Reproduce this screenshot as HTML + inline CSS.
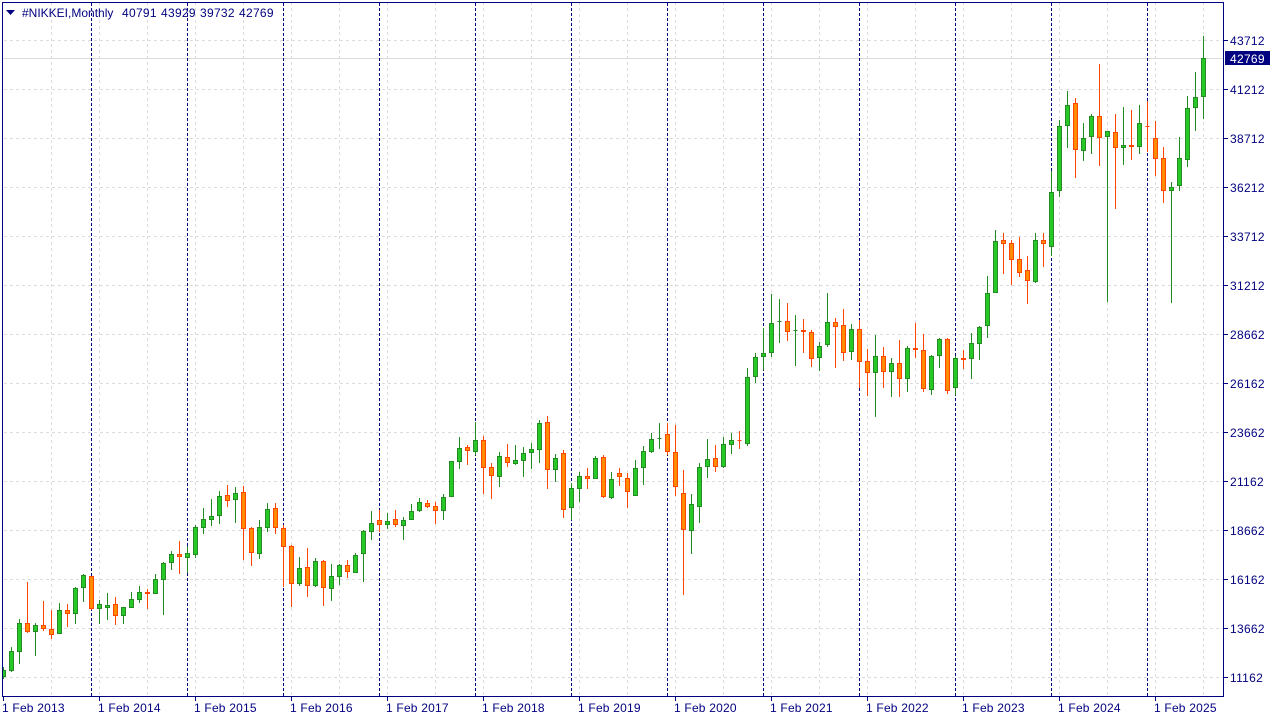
<!DOCTYPE html>
<html><head><meta charset="utf-8"><title>NIKKEI Monthly</title>
<style>
html,body{margin:0;padding:0;background:#fff;width:1280px;height:720px;overflow:hidden}
svg{display:block}
text{font-family:"Liberation Sans",Arial,sans-serif;font-size:12px;fill:#000080}
.p{letter-spacing:.3px}
.d{letter-spacing:.2px}
</style></head><body>
<svg width="1280" height="720" viewBox="0 0 1280 720" xmlns="http://www.w3.org/2000/svg">
<g shape-rendering="crispEdges">
<path fill="none" stroke="#dcdcdc" stroke-dasharray="3 3" d="M4 40.5H1223M4 89.5H1223M4 138.5H1223M4 187.5H1223M4 236.5H1223M4 285.5H1223M4 334.5H1223M4 383.5H1223M4 432.5H1223M4 481.5H1223M4 530.5H1223M4 579.5H1223M4 628.5H1223M4 677.5H1223"/>
<path fill="none" stroke="#dcdcdc" stroke-dasharray="3 3" d="M51.5 2V696M99.5 2V696M147.5 2V696M195.5 2V696M243.5 2V696M291.5 2V696M339.5 2V696M387.5 2V696M435.5 2V696M483.5 2V696M531.5 2V696M579.5 2V696M627.5 2V696M675.5 2V696M723.5 2V696M771.5 2V696M819.5 2V696M867.5 2V696M915.5 2V696M963.5 2V696M1011.5 2V696M1059.5 2V696M1107.5 2V696M1155.5 2V696M1203.5 2V696"/>
<path fill="none" stroke="#dcdcdc" d="M3 58.5H1223"/>
<path fill="none" stroke="#000080" stroke-dasharray="3 2" d="M91.5 3V696M187.5 3V696M283.5 3V696M379.5 3V696M475.5 3V696M571.5 3V696M667.5 3V696M763.5 3V696M859.5 3V696M955.5 3V696M1051.5 3V696M1147.5 3V696"/>
<path fill="none" stroke="#228b22" d="M3.5 667V679M11.5 647V672M19.5 619V664M35.5 623V656M59.5 603V634M75.5 587V624M83.5 574V602M99.5 600V624M107.5 593V620M123.5 607V624M131.5 592V608M139.5 586V603M155.5 574V594M163.5 562V615M171.5 551V570M187.5 546V573M195.5 525V558M203.5 508V534M211.5 499V526M219.5 491V524M235.5 487V523M259.5 520V559M267.5 503V532M299.5 557V586M315.5 558V587M331.5 564V601M339.5 564V585M355.5 553V573M363.5 530V582M371.5 511V540M387.5 513V529M403.5 517V540M411.5 504V520M419.5 498V512M443.5 494V520M451.5 461V497M459.5 437V469M475.5 422V455M499.5 452V487M515.5 445V465M523.5 447V477M531.5 443V469M539.5 420V463M555.5 454V482M571.5 483V520M579.5 472V502M595.5 456V479M611.5 472V499M635.5 460V496M643.5 446V485M651.5 433V453M659.5 423V449M691.5 494V554M699.5 463V523M707.5 439V478M723.5 437V468M731.5 433V454M747.5 368V446M755.5 353V383M763.5 328V370M771.5 294V357M779.5 299V343M795.5 315V366M819.5 342V371M827.5 293V347M851.5 324V360M875.5 335V417M891.5 358V397M907.5 346V392M931.5 355V395M939.5 338V368M955.5 356V395M971.5 333V379M979.5 326V360M987.5 276V338M995.5 230V293M1035.5 233V283M1051.5 171V256M1059.5 120V197M1067.5 91V148M1083.5 123V161M1091.5 114V154M1107.5 131V302M1123.5 107V165M1139.5 105V154M1171.5 182V303M1179.5 137V191M1187.5 96V167M1195.5 72V131M1203.5 36V119"/>
<path fill="none" stroke="#ff4500" d="M27.5 582V633M43.5 601V631M51.5 610V639M67.5 604V627M91.5 576V610M115.5 597V625M147.5 589V609M179.5 541V574M227.5 485V507M243.5 486V560M251.5 527V566M275.5 503V534M283.5 525V587M291.5 545V607M307.5 548V597M323.5 560V606M347.5 560V578M379.5 510V532M395.5 510V527M427.5 500V508M435.5 502V524M467.5 445V465M483.5 436V494M491.5 463V499M507.5 444V467M547.5 416V489M563.5 450V518M587.5 468V489M603.5 455V498M619.5 468V486M627.5 473V508M667.5 423V455M675.5 425V496M683.5 470V595M715.5 445V472M739.5 431V449M787.5 303V341M803.5 319V353M811.5 330V367M835.5 318V368M843.5 309V361M859.5 320V388M867.5 349V396M883.5 347V388M899.5 340V397M915.5 323V358M923.5 334V392M947.5 338V394M963.5 350V369M1003.5 233V274M1011.5 240V285M1019.5 237V277M1027.5 256V304M1043.5 233V267M1075.5 98V178M1099.5 64V166M1115.5 114V209M1131.5 110V160M1147.5 101V152M1155.5 121V176M1163.5 147V203"/>
<path fill="#28c828" stroke="#228b22" d="M2.5 670.5h3v6h-3zM9.5 651.5h4v19h-4zM17.5 623.5h4v28h-4zM33.5 625.5h4v6h-4zM57.5 610.5h4v23h-4zM73.5 588.5h4v25h-4zM81.5 575.5h4v12h-4zM97.5 604.5h4v4h-4zM105.5 605.5h4v2h-4zM121.5 607.5h4v8h-4zM129.5 599.5h4v8h-4zM137.5 592.5h4v7h-4zM153.5 579.5h4v14h-4zM161.5 563.5h4v16h-4zM169.5 554.5h4v8h-4zM185.5 553.5h4v4h-4zM193.5 527.5h4v27h-4zM201.5 519.5h4v8h-4zM209.5 516.5h4v3h-4zM217.5 496.5h4v19h-4zM233.5 493.5h4v6h-4zM257.5 527.5h4v26h-4zM265.5 509.5h4v18h-4zM297.5 568.5h4v15h-4zM313.5 561.5h4v24h-4zM329.5 576.5h4v12h-4zM337.5 565.5h4v11h-4zM353.5 555.5h4v17h-4zM361.5 531.5h4v22h-4zM369.5 523.5h4v8h-4zM385.5 521.5h4v3h-4zM401.5 520.5h4v5h-4zM409.5 511.5h4v8h-4zM417.5 502.5h4v8h-4zM441.5 497.5h4v13h-4zM449.5 461.5h4v35h-4zM457.5 448.5h4v13h-4zM473.5 440.5h4v11h-4zM497.5 456.5h4v20h-4zM513.5 460.5h4v3h-4zM521.5 453.5h4v7h-4zM529.5 449.5h4v3h-4zM537.5 423.5h4v26h-4zM553.5 458.5h4v11h-4zM569.5 488.5h4v19h-4zM577.5 476.5h4v12h-4zM593.5 458.5h4v20h-4zM609.5 479.5h4v18h-4zM633.5 468.5h4v27h-4zM641.5 451.5h4v16h-4zM649.5 439.5h4v12h-4zM657.5 438.5h4v0h-4zM689.5 504.5h4v26h-4zM697.5 467.5h4v39h-4zM705.5 459.5h4v7h-4zM721.5 444.5h4v22h-4zM729.5 440.5h4v4h-4zM745.5 377.5h4v66h-4zM753.5 357.5h4v19h-4zM761.5 353.5h4v3h-4zM769.5 323.5h4v29h-4zM777.5 321.5h4v0h-4zM793.5 330.5h4v0h-4zM817.5 346.5h4v11h-4zM825.5 322.5h4v22h-4zM849.5 329.5h4v22h-4zM873.5 356.5h4v16h-4zM889.5 363.5h4v8h-4zM905.5 348.5h4v30h-4zM929.5 356.5h4v33h-4zM937.5 339.5h4v16h-4zM953.5 358.5h4v29h-4zM969.5 343.5h4v15h-4zM977.5 327.5h4v16h-4zM985.5 293.5h4v32h-4zM993.5 241.5h4v51h-4zM1033.5 240.5h4v41h-4zM1049.5 192.5h4v54h-4zM1057.5 126.5h4v64h-4zM1065.5 105.5h4v20h-4zM1081.5 138.5h4v12h-4zM1089.5 116.5h4v20h-4zM1105.5 131.5h4v5h-4zM1121.5 145.5h4v2h-4zM1137.5 123.5h4v23h-4zM1169.5 187.5h4v3h-4zM1177.5 158.5h4v27h-4zM1185.5 108.5h4v51h-4zM1193.5 97.5h4v10h-4zM1201.5 58.5h4v38h-4z"/>
<path fill="#ff8c00" stroke="#ff4500" d="M25.5 623.5h4v8h-4zM41.5 625.5h4v3h-4zM49.5 629.5h4v5h-4zM65.5 610.5h4v3h-4zM89.5 576.5h4v32h-4zM113.5 604.5h4v11h-4zM145.5 592.5h4v1h-4zM177.5 554.5h4v2h-4zM225.5 495.5h4v5h-4zM241.5 492.5h4v36h-4zM249.5 528.5h4v24h-4zM273.5 508.5h4v19h-4zM281.5 528.5h4v18h-4zM289.5 546.5h4v37h-4zM305.5 567.5h4v18h-4zM321.5 561.5h4v26h-4zM345.5 565.5h4v6h-4zM377.5 520.5h4v4h-4zM393.5 519.5h4v5h-4zM425.5 503.5h4v3h-4zM433.5 506.5h4v4h-4zM465.5 447.5h4v3h-4zM481.5 440.5h4v27h-4zM489.5 467.5h4v8h-4zM505.5 457.5h4v5h-4zM545.5 422.5h4v47h-4zM561.5 453.5h4v56h-4zM585.5 476.5h4v2h-4zM601.5 457.5h4v39h-4zM617.5 473.5h4v3h-4zM625.5 478.5h4v13h-4zM665.5 434.5h4v17h-4zM673.5 452.5h4v34h-4zM681.5 493.5h4v36h-4zM713.5 458.5h4v8h-4zM737.5 440.5h4v0h-4zM785.5 321.5h4v10h-4zM801.5 330.5h4v1h-4zM809.5 332.5h4v26h-4zM833.5 322.5h4v4h-4zM841.5 325.5h4v27h-4zM857.5 329.5h4v32h-4zM865.5 361.5h4v11h-4zM881.5 356.5h4v15h-4zM897.5 363.5h4v15h-4zM913.5 348.5h4v1h-4zM921.5 350.5h4v38h-4zM945.5 339.5h4v51h-4zM961.5 358.5h4v1h-4zM1001.5 240.5h4v3h-4zM1009.5 243.5h4v16h-4zM1017.5 259.5h4v13h-4zM1025.5 270.5h4v10h-4zM1041.5 240.5h4v3h-4zM1073.5 103.5h4v46h-4zM1097.5 116.5h4v21h-4zM1113.5 132.5h4v15h-4zM1129.5 145.5h4v1h-4zM1145.5 126.5h4v0h-4zM1153.5 138.5h4v20h-4zM1161.5 158.5h4v32h-4z"/>
<path fill="none" stroke="#000080" d="M2.5 2.5H1223.5V696.5H2.5Z"/>
<path fill="none" stroke="#000080" d="M1224 40.5h4M1224 89.5h4M1224 138.5h4M1224 187.5h4M1224 236.5h4M1224 285.5h4M1224 334.5h4M1224 383.5h4M1224 432.5h4M1224 481.5h4M1224 530.5h4M1224 579.5h4M1224 628.5h4M1224 677.5h4M3.5 697v4M99.5 697v4M195.5 697v4M291.5 697v4M387.5 697v4M483.5 697v4M579.5 697v4M675.5 697v4M771.5 697v4M867.5 697v4M963.5 697v4M1059.5 697v4M1155.5 697v4"/>
<rect x="1225" y="51" width="45" height="14" fill="#000080"/>
</g>
<polygon points="6,10 15,10 10.5,15" fill="#000080"/>
<text x="22" y="17">#NIKKEI,Monthly</text>
<text class="p" x="122" y="17">40791</text>
<text class="p" x="161" y="17">43929</text>
<text class="p" x="200" y="17">39732</text>
<text class="p" x="239" y="17">42769</text>
<text class="p" x="1230" y="45">43712</text>
<text class="p" x="1230" y="63" style="fill:#fff">42769</text>
<text class="p" x="1230" y="94">41212</text>
<text class="p" x="1230" y="143">38712</text>
<text class="p" x="1230" y="192">36212</text>
<text class="p" x="1230" y="241">33712</text>
<text class="p" x="1230" y="290">31212</text>
<text class="p" x="1230" y="339">28662</text>
<text class="p" x="1230" y="388">26162</text>
<text class="p" x="1230" y="437">23662</text>
<text class="p" x="1230" y="486">21162</text>
<text class="p" x="1230" y="535">18662</text>
<text class="p" x="1230" y="584">16162</text>
<text class="p" x="1230" y="633">13662</text>
<text class="p" x="1230" y="682">11162</text>
<text class="d" x="2" y="712">1 Feb 2013</text>
<text class="d" x="98" y="712">1 Feb 2014</text>
<text class="d" x="194" y="712">1 Feb 2015</text>
<text class="d" x="290" y="712">1 Feb 2016</text>
<text class="d" x="386" y="712">1 Feb 2017</text>
<text class="d" x="482" y="712">1 Feb 2018</text>
<text class="d" x="578" y="712">1 Feb 2019</text>
<text class="d" x="674" y="712">1 Feb 2020</text>
<text class="d" x="770" y="712">1 Feb 2021</text>
<text class="d" x="866" y="712">1 Feb 2022</text>
<text class="d" x="962" y="712">1 Feb 2023</text>
<text class="d" x="1058" y="712">1 Feb 2024</text>
<text class="d" x="1154" y="712">1 Feb 2025</text>
</svg>
</body></html>
